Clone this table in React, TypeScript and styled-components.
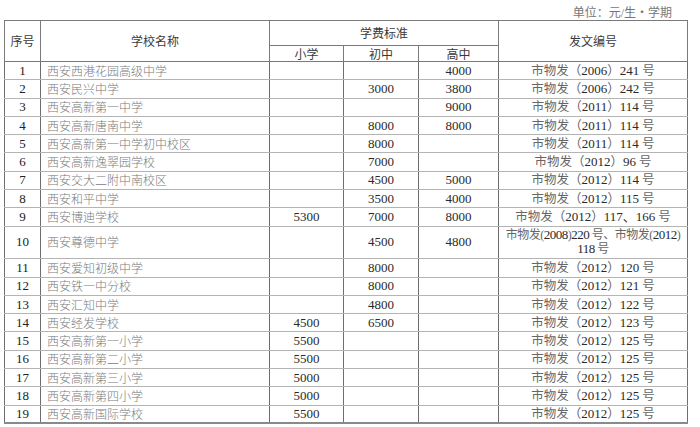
import React from "react";
import styled, { createGlobalStyle } from "styled-components";

const Global = createGlobalStyle`
  html, body { margin: 0; padding: 0; background: #fff; }
  body { width: 700px; height: 427px; overflow: hidden; }
`;

const Page = styled.div`
  width: 700px;
  height: 427px;
  display: flex;
  flex-direction: column;
  background: #fff;
`;

const UnitLine = styled.div`
  height: 20px;
  display: flex;
  justify-content: flex-end;
  align-items: center;
  padding-right: 28px;
  font-family: "Liberation Serif", "Noto Sans CJK SC", serif;
  font-size: 12px;
  color: #777;
  box-sizing: border-box;
  padding-top: 4px;
`;

const TableWrap = styled.div`
  padding-left: 4px;
`;

const Table = styled.table`
  border-collapse: collapse;
  table-layout: fixed;
  width: 683px;
  border: 1.5px solid #707070;
  border-bottom: 2px solid #8a8a8a;
`;

const HeadRow = styled.tr<{ $h: number }>`
  height: ${(p) => p.$h}px;
`;

const HeadCell = styled.th`
  font-family: "Noto Sans CJK SC", "Noto Sans", sans-serif;
  font-weight: 400;
  font-size: 12px;
  color: #3a3a3a;
  border: 1px solid #7a7a7a;
  padding: 0;
  line-height: 12px;
  text-align: center;
  vertical-align: middle;
`;

const Row = styled.tr<{ $tall?: boolean }>`
  height: ${(p) => (p.$tall ? 32.6 : 18.3)}px;
`;

const Cell = styled.td<{ $align?: "left" | "center" }>`
  border-top: 1px solid #b4b4b4;
  border-bottom: 1px solid #b4b4b4;
  border-left: 1px solid #6e6e6e;
  border-right: 1px solid #6e6e6e;
  padding: ${(p) => (p.$align === "left" ? "0 0 0 6px" : "0")};
  text-align: ${(p) => p.$align ?? "center"};
  vertical-align: middle;
  font-size: 12px;
  line-height: 12px;
  white-space: nowrap;
  overflow: visible;
`;

const Seq = styled(Cell)`
  font-family: "Liberation Serif", serif;
  font-size: 13px;
  color: #222;
`;

const Name = styled(Cell)`
  font-family: "Noto Sans CJK SC", "Liberation Serif", sans-serif;
  color: #7a7a7a;
  font-weight: 300;
`;

const Num = styled(Cell)`
  font-family: "Liberation Serif", serif;
  font-size: 13px;
  color: #2a2a2a;
`;

const Doc = styled(Cell)`
  font-family: "Liberation Serif", "Noto Sans CJK SC", serif;
  font-size: 12.5px;
  color: #666;
`;

const DocLine = styled.div`
  line-height: 13px;
  font-size: 12px;
  letter-spacing: -0.5px;
  white-space: nowrap;
`;

const DocNum = styled.span`
  color: #2a2a2a;
  font-size: 13px;
`;

type R = {
  n: number;
  name: string;
  p?: string;
  m?: string;
  h?: string;
  doc: React.ReactNode;
  tall?: boolean;
};

const d = (y: string, no: string) => (
  <>
    市物发（<DocNum>{y}</DocNum>）<DocNum>{no}</DocNum> 号
  </>
);

const rows: R[] = [
  { n: 1, name: "西安西港花园高级中学", h: "4000", doc: d("2006", "241") },
  { n: 2, name: "西安民兴中学", m: "3000", h: "3800", doc: d("2006", "242") },
  { n: 3, name: "西安高新第一中学", h: "9000", doc: d("2011", "114") },
  { n: 4, name: "西安高新唐南中学", m: "8000", h: "8000", doc: d("2011", "114") },
  { n: 5, name: "西安高新第一中学初中校区", m: "8000", doc: d("2011", "114") },
  { n: 6, name: "西安高新逸翠园学校", m: "7000", doc: d("2012", "96") },
  { n: 7, name: "西安交大二附中南校区", m: "4500", h: "5000", doc: d("2012", "114") },
  { n: 8, name: "西安和平中学", m: "3500", h: "4000", doc: d("2012", "115") },
  { n: 9, name: "西安博迪学校", p: "5300", m: "7000", h: "8000", doc: d("2012", "117、166") },
  {
    n: 10,
    name: "西安尊德中学",
    m: "4500",
    h: "4800",
    tall: true,
    doc: (
      <>
        <DocLine>
          市物发(<DocNum>2008</DocNum>)<DocNum>220</DocNum> 号、市物发(<DocNum>2012</DocNum>)
        </DocLine>
        <DocLine>
          <DocNum>118</DocNum> 号
        </DocLine>
      </>
    ),
  },
  { n: 11, name: "西安爱知初级中学", m: "8000", doc: d("2012", "120") },
  { n: 12, name: "西安铁一中分校", m: "8000", doc: d("2012", "121") },
  { n: 13, name: "西安汇知中学", m: "4800", doc: d("2012", "122") },
  { n: 14, name: "西安经发学校", p: "4500", m: "6500", doc: d("2012", "123") },
  { n: 15, name: "西安高新第一小学", p: "5500", doc: d("2012", "125") },
  { n: 16, name: "西安高新第二小学", p: "5500", doc: d("2012", "125") },
  { n: 17, name: "西安高新第三小学", p: "5000", doc: d("2012", "125") },
  { n: 18, name: "西安高新第四小学", p: "5000", doc: d("2012", "125") },
  { n: 19, name: "西安高新国际学校", p: "5500", doc: d("2012", "125") },
];

export default function App() {
  return (
    <Page>
      <Global />
      <UnitLine>单位：元/生・学期</UnitLine>
      <TableWrap>
        <Table>
          <colgroup>
            <col style={{ width: 36 }} />
            <col style={{ width: 229 }} />
            <col style={{ width: 74 }} />
            <col style={{ width: 75 }} />
            <col style={{ width: 80 }} />
            <col style={{ width: 189 }} />
          </colgroup>
          <thead>
            <HeadRow $h={25}>
              <HeadCell rowSpan={2}>序号</HeadCell>
              <HeadCell rowSpan={2}>学校名称</HeadCell>
              <HeadCell colSpan={3}>学费标准</HeadCell>
              <HeadCell rowSpan={2}>发文编号</HeadCell>
            </HeadRow>
            <HeadRow $h={16}>
              <HeadCell>小学</HeadCell>
              <HeadCell>初中</HeadCell>
              <HeadCell>高中</HeadCell>
            </HeadRow>
          </thead>
          <tbody>
            {rows.map((r) => (
              <Row key={r.n} $tall={r.tall}>
                <Seq>{r.n}</Seq>
                <Name $align="left">{r.name}</Name>
                <Num>{r.p}</Num>
                <Num>{r.m}</Num>
                <Num>{r.h}</Num>
                <Doc>{r.doc}</Doc>
              </Row>
            ))}
          </tbody>
        </Table>
      </TableWrap>
    </Page>
  );
}
